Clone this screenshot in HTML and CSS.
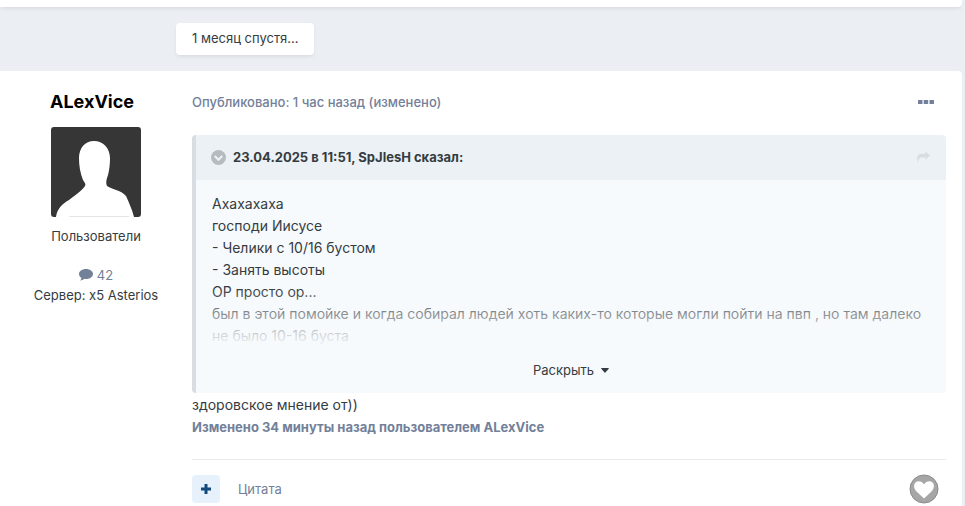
FILE: index.html
```html
<!DOCTYPE html>
<html lang="ru">
<head>
  <meta charset="UTF-8" />
  <meta name="viewport" content="width=device-width, initial-scale=1.0"/>
  <title>Форум</title>
  <link rel="stylesheet" href="styles.css">
</head>
<body>

  <!-- End of the previous post -->
  <div class="post-end"></div>

  <div class="time-gap">1 месяц спустя...</div>

  <article class="post">

    <!-- Author -->
    <aside class="author">
      <h3><a href="#">ALexVice</a></h3>
      <a href="#" class="avatar" aria-label="ALexVice">
        <svg viewBox="0 0 90 90" aria-hidden="true">
          <rect width="90" height="90" fill="#363636"/>
          <path fill="#fff" d="M5 90C6 82 11 77 18 73C24 68 31 64 34 59C35 57 34 56 32 53C29 46 28 38 28 31C28 21 34 14 43 14C52 14 59 21 59 31C59 38 58 46 56 51C55 54 55 57 56 59C60 62 70 63 75 69C78 76 81 82 83 90Z"/>
          <path stroke="#e6e6e6" d="M18 89.500H78"/>
        </svg>
      </a>
      <ul>
        <li class="group">Пользователи</li>
        <li>
          <a href="#" class="posts">
            <svg width="14" height="12" viewBox="0 0 14 12" aria-hidden="true">
              <path fill="currentColor" d="M7 0C3 0 0 2.200 0 5C0 6.600 1 8 2.500 8.900C2.300 10 1.700 10.800 1 11.500C2.800 11.500 4.200 10.800 5.200 9.800C5.800 9.900 6.400 10 7 10C11 10 14 7.800 14 5C14 2.200 11 0 7 0Z"/>
            </svg>
            42
          </a>
        </li>
        <li>Сервер: x5 Asterios</li>
      </ul>
    </aside>

    <div class="post-main">
      <header class="post-header">
        <a href="#">Опубликовано: 1 час назад (изменено)</a>
        <button class="more" aria-label="Ещё">
          <svg width="16" height="4" viewBox="0 0 16 4" aria-hidden="true">
            <g fill="currentColor">
              <rect width="4.500" height="4" rx=".5"/>
              <rect x="5.700" width="4.500" height="4" rx=".5"/>
              <rect x="11.500" width="4.500" height="4" rx=".5"/>
            </g>
          </svg>
        </button>
      </header>

      <blockquote class="quote">
        <div class="quote-header">
          <button class="toggle" aria-label="Свернуть цитату">
            <svg width="15" height="15" viewBox="0 0 14 14" aria-hidden="true">
              <circle cx="7" cy="7" r="7" fill="currentColor"/>
              <path d="M3.500 5.500L7 9L10.500 5.500" fill="none" stroke="#ecf1f5" stroke-width="2"/>
            </svg>
          </button>
          <cite>23.04.2025 в 11:51, SpJlesH сказал:</cite>
          <a href="#" class="share" aria-label="Перейти к сообщению">
            <svg width="13" height="12" viewBox="0 0 14 12" aria-hidden="true">
              <path fill="currentColor" d="M14 4.500L9 0V2.500H6C2 2.500 0 4.500 0 7.500C0 9 .6 10.500 1.300 12C1.600 12 1.700 11.800 1.600 11.500C1.200 8.500 2.300 6.500 6 6.500H9V9Z"/>
            </svg>
          </a>
        </div>
        <div class="quote-body">
          <p>
            Ахахахаха<br>
            господи Иисусе<br>
            - Челики с 10/16 бустом<br>
            - Занять высоты<br>
            ОР просто ор...<br>
            был в этой помойке и когда собирал людей хоть каких-то которые могли пойти на пвп , но там далеко не было 10-16 буста
          </p>
          <button class="expand">
            Раскрыть
            <svg width="8" height="5" viewBox="0 0 8 5" aria-hidden="true">
              <path fill="currentColor" d="M.5 0H7.500Q8 .3 7.700 .8L4.400 4.600Q4 5 3.600 4.600L.3 .8Q0 .3 .5 0Z"/>
            </svg>
          </button>
        </div>
      </blockquote>

      <p class="message">здоровское мнение от))</p>
      <p class="edited">Изменено 34 минуты назад пользователем ALexVice</p>

      <footer class="post-footer">
        <button class="multiquote" aria-label="Мультицитата">
          <svg width="10" height="10" viewBox="0 0 10 10" aria-hidden="true">
            <path d="M5 0V10M0 5H10" stroke="currentColor" stroke-width="3"/>
          </svg>
        </button>
        <a href="#">Цитата</a>
        <button class="like" aria-label="Нравится">
          <svg width="30" height="30" viewBox="0 0 30 30" aria-hidden="true">
            <circle cx="15" cy="15" r="14" fill="#a6a6a6" stroke="#8c8c8c"/>
            <path fill="#fff" d="M15 24.500L7.500 17.500C4.500 14.500 4.500 10.500 6.500 8.500C9 6.300 13 7 15 10.500C17 7 21 6.300 23.500 8.500C25.500 10.500 25.500 14.500 22.500 17.500Z"/>
          </svg>
        </button>
      </footer>
    </div>

  </article>

</body>
</html>
```
FILE: styles.css
```css
:root {
  --bg: #ebeff4;
  --card: #fff;
  --text: #353c41;
  --muted: #738099;
  --quote-bg: #f7fafd;
  --quote-header: #ecf1f5;
}

* {
  box-sizing: border-box;
}

body {
  margin: 0;
  padding-right: 3px;
  font-family: Inter, sans-serif;
  font-size: 13px;
  line-height: 20px;
  background-color: var(--bg);
  color: var(--text);
}

a {
  color: inherit;
  text-decoration: none;
}

button {
  border: none;
  padding: 0;
  background: none;
  color: inherit;
  font: inherit;
  cursor: pointer;
}

svg {
  display: block;
}

p {
  margin: 0;
}

.post-end {
  height: 7px;
  background: var(--card);
  border-radius: 0 0 4px 0;
  box-shadow: 0 2px 4px -1px rgba(0,0,0,0.1);
}

.time-gap {
  width: fit-content;
  margin: 16px 0 16px 176px;
  padding: 5px 16px 7px;
  background: var(--card);
  border-radius: 4px;
  box-shadow: 0 2px 4px -1px rgba(0,0,0,0.1);
}

.post {
  display: flex;
  background: var(--card);
  border-radius: 0 4px 0 0;
}

/* Author column */
.author {
  flex: 0 0 192px;
  padding-top: 20px;
  text-align: center;
}

.author h3 {
  margin: 0;
  padding-right: 8px;
  font-size: 18px;
  font-weight: 700;
  line-height: 22px;
  color: #000;
}

.avatar {
  display: block;
  width: 90px;
  margin: 14px auto 9px;
  border-radius: 3px;
  overflow: hidden;
}

.author ul {
  list-style: none;
  margin: 0;
  padding: 0;
}

.group {
  margin-bottom: 19px;
}

.posts {
  display: flex;
  justify-content: center;
  align-items: center;
  gap: 4px;
  color: var(--muted);
}

/* Post column */
.post-main {
  flex: 1;
  min-width: 0;
  padding: 21px 16px 2px 0;
}

.post-header {
  display: flex;
  justify-content: space-between;
  align-items: center;
  padding-right: 12px;
  color: var(--muted);
  font-weight: 500;
}

.quote {
  margin: 23px 0 0;
  border-left: 4px solid #d8dce3;
  border-radius: 4px;
  background: var(--quote-bg);
  overflow: hidden;
}

.quote-header {
  display: flex;
  align-items: center;
  gap: 7px;
  height: 45px;
  padding: 0 16px 1px 15px;
  background: var(--quote-header);
}

.quote-header cite {
  font-style: normal;
  font-weight: 700;
}

.toggle {
  color: #b6bbbf;
}

.share {
  margin-left: auto;
  color: #d9dde1;
}

.quote-body {
  position: relative;
  padding: 13px 16px 46px;
  font-size: 14px;
  line-height: 22px;
}

/* Fades out the last lines of a long quote */
.expand {
  position: absolute;
  left: 0;
  right: 0;
  bottom: 0;
  height: 105px;
  padding-bottom: 12px;
  display: flex;
  justify-content: center;
  align-items: flex-end;
  gap: 7px;
  font-size: 13px;
  background: linear-gradient(to bottom, transparent, var(--quote-bg) 56%);
}

.expand svg {
  margin-bottom: 8px;
}

.message {
  font-size: 14px;
  line-height: 22px;
  margin-top: 1px;
}

.edited {
  line-height: 22px;
  font-weight: 700;
  color: var(--muted);
}

.post-footer {
  display: flex;
  align-items: center;
  gap: 18px;
  margin-top: 21px;
  padding: 14px 7px 0 0;
  border-top: 1px solid #e9eaed;
  color: var(--muted);
}

.multiquote {
  display: grid;
  place-items: center;
  width: 28px;
  height: 28px;
  border-radius: 4px;
  background: #e6f1fb;
  color: #114a7c;
}

.like {
  margin-left: auto;
}
```
